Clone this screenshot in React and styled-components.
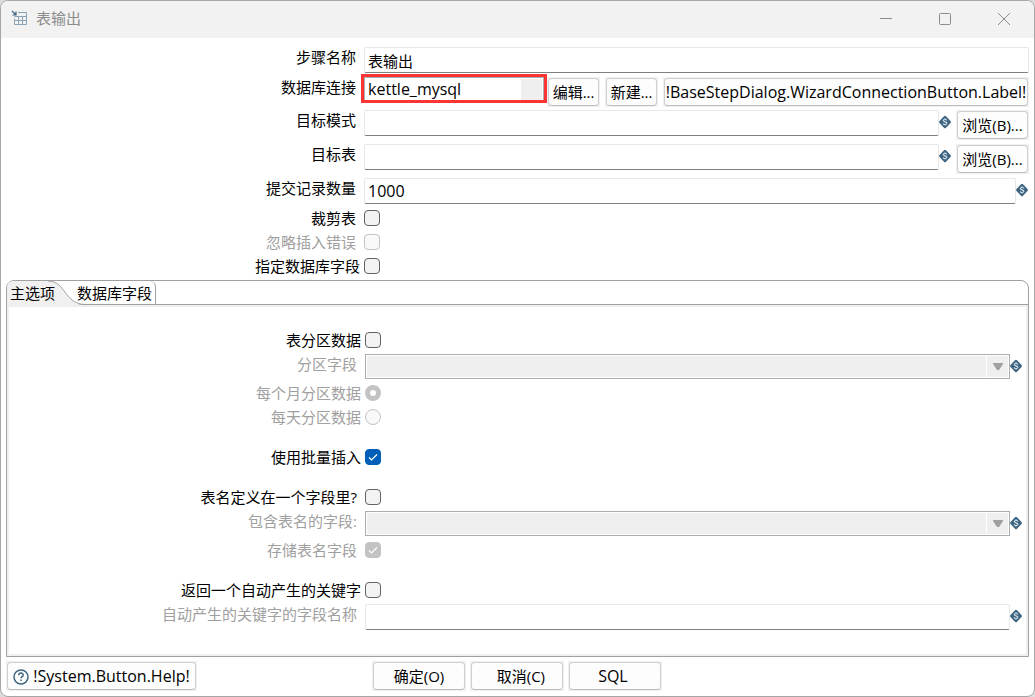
import React from 'react';
import styled, { createGlobalStyle, css } from 'styled-components';

const GlobalStyle = createGlobalStyle`
  *, *::before, *::after { box-sizing: border-box; }
  body {
    margin: 0;
    background: #dcdcdc;
    color: #000;
    font: 15px/21px "Open Sans", "Noto Sans CJK SC", sans-serif;
  }
  button, input, select { font: inherit; color: inherit; margin: 0; }
`;

const Window = styled.main`
  display: flex;
  flex-direction: column;
  min-height: 100vh;
  border: 1px solid #a6a6a6;
  border-radius: 8px;
  background: #fff;
  overflow: hidden;
`;

const TitleBar = styled.header`
  display: flex;
  align-items: center;
  height: 37px;
  padding: 0 1px 2px 10px;
  background: #f2f2f2;
  color: #8c8c8c;
`;

const Title = styled.h1`
  flex: 1;
  margin: 0 0 0 8px;
  font-size: 15px;
  font-weight: 400;
`;

const CaptionButton = styled.button`
  display: grid;
  place-items: center;
  width: 59px;
  height: 34px;
  padding: 0;
  border: 0;
  background: none;
  color: #8c8c8c;
`;

const Content = styled.form`
  display: flex;
  flex: 1;
  flex-direction: column;
  padding: 9px 5px 5px;
`;

const Row = styled.div`
  display: grid;
  grid-template-columns: 35% minmax(0, 1fr);
  align-items: start;
  height: ${p => p.$height || 34}px;
  padding-top: ${p => p.$top || 0}px;
`;

const ToggleLine = styled(Row)`
  align-items: center;
  height: 24px;
`;

const Label = styled.label`
  padding-right: ${p => (p.$tight ? 4 : 8)}px;
  text-align: right;
  white-space: nowrap;
  color: ${p => (p.$disabled ? '#a0a0a0' : '#000')};
`;

const Controls = styled.div`
  display: flex;
  align-items: flex-start;
  padding-right: ${p => p.$end || 0}px;
`;

const TextBox = styled.input`
  flex: 1;
  min-width: 0;
  height: 26px;
  padding: 0 3px;
  border: 1px solid #e8e8e8;
  border-bottom-color: #808080;
  border-radius: 2px;
  background: #fff;
  font-size: ${p => (p.$latin ? 16 : 15)}px;
  outline: 0;
`;

const SelectFrame = styled.div`
  position: relative;
  display: flex;
  flex: 1;
  height: 25px;
  ${p => p.$highlight && css`
    flex: 0 0 180px;
    height: 23px;
    margin-right: 3px;
    outline: 3px solid #fb3535;
  `}
`;

const Select = styled.select`
  width: 100%;
  padding: 0 24px 0 3px;
  border: 1px solid #adadad;
  border-radius: 0;
  appearance: none;
  background: #fff;
  opacity: 1;
  &:disabled {
    background: #efefef;
    box-shadow: inset 0 0 0 1px #fff;
  }
`;

const ConnectionSelect = styled(Select)`
  border-bottom: 0;
  background: linear-gradient(#efefef, #efefef) right 1px top 1px / 21px 100% no-repeat #fff;
  font-size: 16px;
`;

const ArrowCell = styled.span`
  position: absolute;
  top: 2px;
  right: 2px;
  bottom: 2px;
  display: grid;
  place-items: center;
  width: 22px;
  border-left: 1px solid #fff;
  pointer-events: none;
`;

const ButtonShell = styled.button`
  display: flex;
  flex: ${p => (p.$grow ? '1' : '0 0 auto')};
  width: ${p => (p.$width ? `${p.$width}px` : 'auto')};
  height: 30px;
  padding: 1px;
  border: 0;
  background: #f0f0f0;
  font-size: ${p => (p.$latin ? 16 : 15)}px;
  white-space: nowrap;
`;

const ButtonFace = styled.span`
  display: flex;
  flex: 1;
  align-items: center;
  justify-content: center;
  gap: 4px;
  height: 28px;
  padding-top: 1px;
  border: 1px solid #cfcfcf;
  border-bottom-color: #bdbdbd;
  border-radius: 4px;
  background: #fdfdfd;
`;

const ButtonGroup = styled.div`
  display: flex;
  flex: 1;
  gap: ${p => p.$gap}px;
`;

const VariableMark = styled.svg`
  flex: none;
  width: 12px;
  height: 14px;
  margin: 5px ${p => p.$end || 0}px 0 0;
`;

const CheckBox = styled.input`
  appearance: none;
  width: 16px;
  height: 16px;
  border: 1px solid #626262;
  border-radius: 4px;
  background: #f3f3f3;
  &:disabled { border-color: #c3c3c3; background: #f9f9f9; }
  &:checked { border-color: #005fb8; background: #005fb8; }
  &:checked:disabled { border-color: #c3c3c3; background: #c3c3c3; }
`;

const RadioButton = styled.input`
  appearance: none;
  width: 16px;
  height: 16px;
  border: 1px solid #c3c3c3;
  border-radius: 50%;
  background: #f9f9f9;
  &:checked { border-width: 5px; background: #fff; }
`;

const ToggleBox = styled.span`
  position: relative;
  display: flex;
  width: 16px;
  height: 16px;
`;

const Tick = styled.svg`
  position: absolute;
  inset: 0;
  pointer-events: none;
`;

const TabFolder = styled.section`
  display: flex;
  flex: 1;
  flex-direction: column;
  margin-top: 2px;
  border: 1px solid #a0a0a0;
  border-radius: 8px 8px 0 0;
`;

const TabStrip = styled.div`
  display: flex;
  height: 24px;
  border-bottom: 1px solid #a0a0a0;
`;

const Tab = styled.button`
  position: relative;
  width: ${p => p.$width}px;
  height: 23px;
  padding: 1px 3px 0;
  border: 0;
  border-right: ${p => (p.$active ? '0' : '1px solid #a0a0a0')};
  border-top-right-radius: 6px;
  background: none;
  text-align: ${p => (p.$active ? 'left' : 'right')};
  white-space: nowrap;
`;

const TabCurve = styled.svg`
  position: absolute;
  top: 0;
  left: 0;
`;

const TabText = styled.span`
  position: relative;
`;

const TabBody = styled.div`
  display: flex;
  flex: 1;
  flex-direction: column;
  gap: 16px;
  padding: 21px 0 22px;
  border: 2px solid #f0f0f0;
`;

const Footer = styled.footer`
  display: grid;
  grid-template-columns: 1fr auto 1fr;
  margin-top: 4px;
  padding-right: 1px;
`;

function StepIcon() {
  return (
    <svg width="17" height="17" viewBox="0 0 17 17" fill="none" aria-hidden="true">
      <path d="M7 2.500h8.500v12h-12v-6M3.500 6.500h12M3.500 10.500h12M7.500 6.500v8M11.500 6.500v8" stroke="#8aa3b5" />
      <path d="M1 1l4 4M5 1.500v3.500H1.500" stroke="#3d6480" strokeWidth="1.200" />
    </svg>
  );
}

function Variable({ end }) {
  return (
    <VariableMark $end={end} viewBox="0 0 12 14" aria-hidden="true">
      <path d="M5 1.300Q6 .3 7 1.300L11.500 6Q12.300 7 11.500 8L7 12.700Q6 13.700 5 12.700L.5 8Q-.3 7 .5 6z" fill="#3d6480" />
      <path
        d="M7.900 5.300C7.500 4.100 4.200 4.100 4.200 5.600c0 1.500 3.700 1.100 3.700 2.700 0 1.600-3.500 1.500-3.900.2M6 3.300v1M6 9.500v1"
        fill="none"
        stroke="#d3e0e9"
        strokeWidth="1.100"
      />
    </VariableMark>
  );
}

function Button({ children, ...rest }) {
  return (
    <ButtonShell type="button" {...rest}>
      <ButtonFace>{children}</ButtonFace>
    </ButtonShell>
  );
}

function CheckRow({ id, label, wide, disabled, checked }) {
  return (
    <ToggleLine>
      <Label htmlFor={id} $tight={!wide} $disabled={disabled}>{label}</Label>
      <ToggleBox>
        <CheckBox id={id} type="checkbox" disabled={disabled} defaultChecked={checked} />
        {checked && (
          <Tick width="16" height="16" viewBox="0 0 16 16" fill="none" stroke="#fff" strokeWidth="1.200" aria-hidden="true">
            <path d="M4 8.500l2.500 2.500L12 5.500" />
          </Tick>
        )}
      </ToggleBox>
    </ToggleLine>
  );
}

function RadioRow({ id, label, checked }) {
  return (
    <ToggleLine>
      <Label htmlFor={id} $tight $disabled>{label}</Label>
      <RadioButton id={id} name="partition" type="radio" disabled defaultChecked={checked} />
    </ToggleLine>
  );
}

function ComboRow({ id, label }) {
  return (
    <Row $height={29} $top={2}>
      <Label htmlFor={id} $disabled>{label}</Label>
      <Controls $end={4}>
        <SelectFrame>
          <Select id={id} disabled />
          <ArrowCell>
            <svg width="10" height="7" viewBox="0 0 10 7" aria-hidden="true">
              <path d="M0 0h10v1L6 7H4L0 1z" fill="#a0a0a0" />
            </svg>
          </ArrowCell>
        </SelectFrame>
        <Variable />
      </Controls>
    </Row>
  );
}

function BrowseRow({ id, label }) {
  return (
    <Row>
      <Label htmlFor={id}>{label}</Label>
      <Controls>
        <TextBox id={id} />
        <Variable end={5} />
        <Button $width={73}>浏览(B)...</Button>
      </Controls>
    </Row>
  );
}

export default function App() {
  return (
    <>
      <GlobalStyle />
      <Window>
        <TitleBar>
          <StepIcon />
          <Title>表输出</Title>
          <CaptionButton type="button" aria-label="Minimize">
            <svg width="12" height="12" stroke="currentColor"><path d="M0 5.500h12" /></svg>
          </CaptionButton>
          <CaptionButton type="button" aria-label="Maximize">
            <svg width="12" height="12" fill="none" stroke="currentColor"><rect x=".5" y=".5" width="11" height="11" rx="1" /></svg>
          </CaptionButton>
          <CaptionButton type="button" aria-label="Close">
            <svg width="12" height="12" stroke="currentColor"><path d="M0 0l12 12M12 0L0 12" /></svg>
          </CaptionButton>
        </TitleBar>
        <Content>
          <Row $height={30}>
            <Label htmlFor="step">步骤名称</Label>
            <Controls><TextBox id="step" defaultValue="表输出" /></Controls>
          </Row>
          <Row $height={33}>
            <Label htmlFor="connection">数据库连接</Label>
            <Controls>
              <SelectFrame $highlight>
                <ConnectionSelect id="connection"><option>kettle_mysql</option></ConnectionSelect>
              </SelectFrame>
              <ButtonGroup $gap={5}>
                <Button $width={53}>编辑...</Button>
                <Button $width={53}>新建...</Button>
                <Button $grow $latin>!BaseStepDialog.WizardConnectionButton.Label!</Button>
              </ButtonGroup>
            </Controls>
          </Row>
          <BrowseRow id="schema" label="目标模式" />
          <BrowseRow id="table" label="目标表" />
          <Row $height={28}>
            <Label htmlFor="commit">提交记录数量</Label>
            <Controls $end={1}>
              <TextBox id="commit" $latin defaultValue="1000" />
              <Variable />
            </Controls>
          </Row>
          <CheckRow id="truncate" label="裁剪表" wide />
          <CheckRow id="ignore" label="忽略插入错误" wide disabled />
          <CheckRow id="fields" label="指定数据库字段" />

          <TabFolder>
            <TabStrip role="tablist">
              <Tab type="button" role="tab" aria-selected="true" $active $width={62}>
                <TabCurve width="78" height="24" viewBox="0 0 78 24" aria-hidden="true">
                  <path d="M0 24V7Q0 0 7 0H42C58 0 58 23 76 24z" fill="#f0f0f0" />
                  <path d="M41 0C59 0 57 23 78 23.500" fill="none" stroke="#a0a0a0" />
                </TabCurve>
                <TabText>主选项</TabText>
              </Tab>
              <Tab type="button" role="tab" aria-selected="false" $width={87}>
                <TabText>数据库字段</TabText>
              </Tab>
            </TabStrip>
            <TabBody role="tabpanel">
              <div>
                <CheckRow id="partition" label="表分区数据" />
                <ComboRow id="partition-field" label="分区字段" />
                <RadioRow id="monthly" label="每个月分区数据" checked />
                <RadioRow id="daily" label="每天分区数据" />
              </div>
              <CheckRow id="batch" label="使用批量插入" checked />
              <div>
                <CheckRow id="name-in-field" label="表名定义在一个字段里?" wide />
                <ComboRow id="name-field" label="包含表名的字段:" />
                <CheckRow id="store-name" label="存储表名字段" wide disabled checked />
              </div>
              <div>
                <CheckRow id="return-key" label="返回一个自动产生的关键字" />
                <Row $height={29} $top={2}>
                  <Label htmlFor="key-field" $disabled>自动产生的关键字的字段名称</Label>
                  <Controls $end={4}>
                    <TextBox id="key-field" disabled />
                    <Variable />
                  </Controls>
                </Row>
              </div>
            </TabBody>
          </TabFolder>

          <Footer>
            <div>
              <Button $width={191} $latin>
                <svg width="16" height="16" viewBox="0 0 16 16" fill="none" stroke="#3d6480" strokeWidth="1.500" aria-hidden="true">
                  <circle cx="8" cy="8" r="7" />
                  <path d="M5.800 6.200C5.800 3.400 10.200 3.500 10.200 6c0 1.700-2.200 1.600-2.200 3.300M8 10.500v1.500" />
                </svg>
                !System.Button.Help!
              </Button>
            </div>
            <ButtonGroup $gap={4}>
              <Button $width={94}>确定(O)</Button>
              <Button $width={94}>{'\u00a0\u00a0取消(C)'}</Button>
              <Button $width={94} $latin>{'SQL\u00a0'}</Button>
            </ButtonGroup>
          </Footer>
        </Content>
      </Window>
    </>
  );
}
